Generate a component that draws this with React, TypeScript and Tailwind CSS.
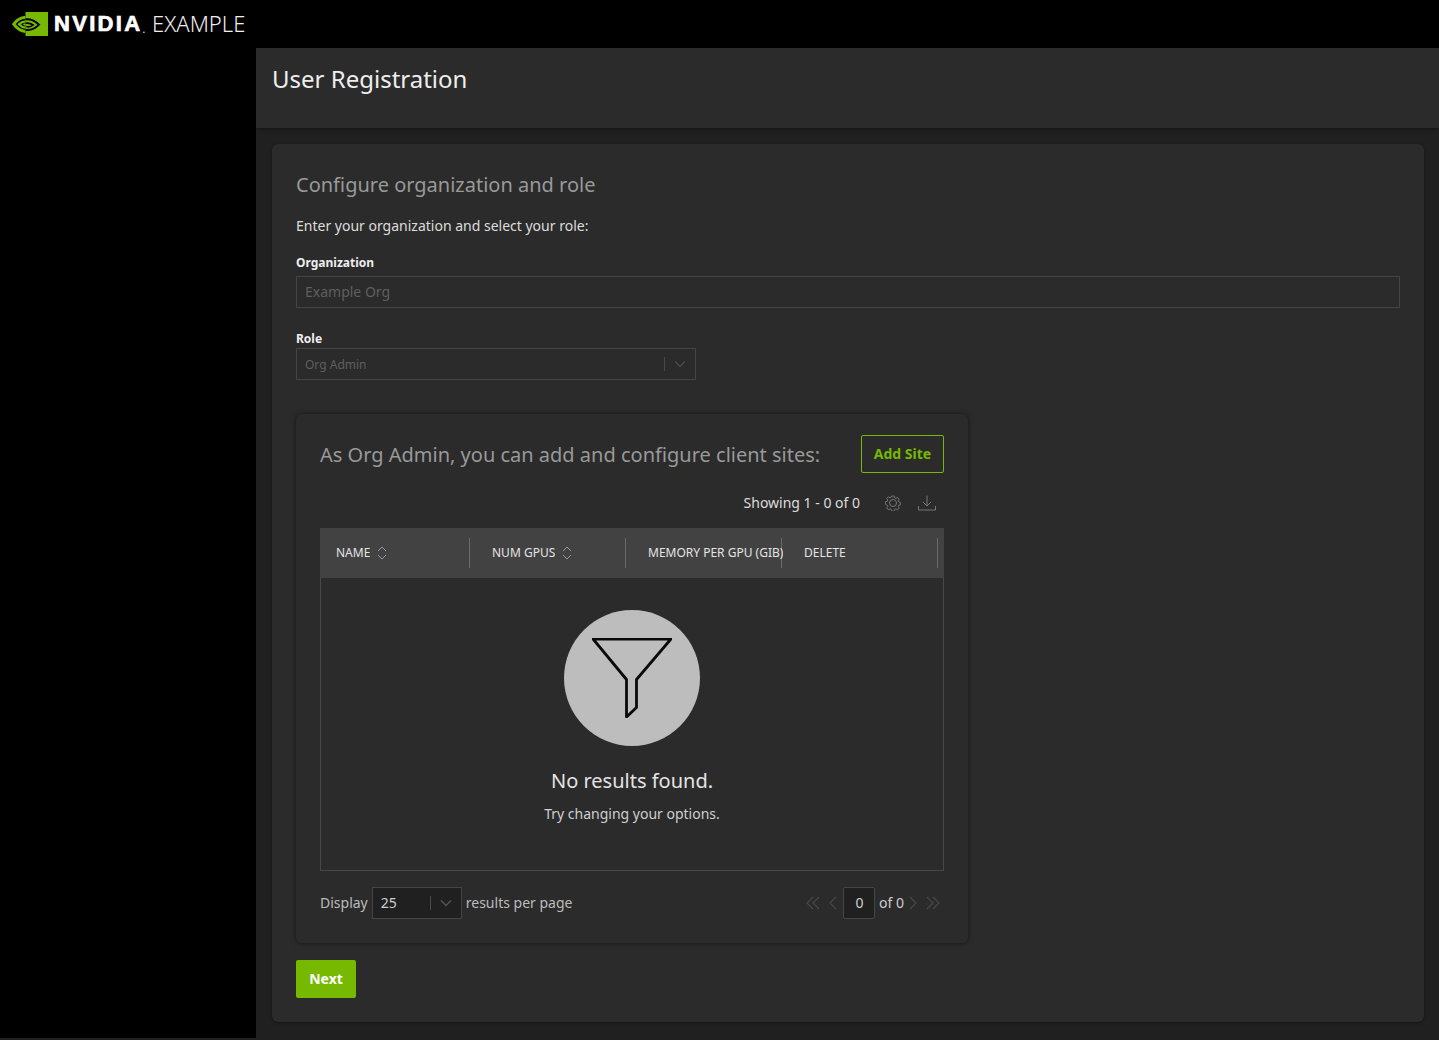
import React from 'react';

const Chevron = ({ d, className = '' }: { d: string; className?: string }) => (
  <svg viewBox="0 0 16 16" fill="none" stroke="currentColor" strokeWidth="1.200" className={className}>
    <path d={d} />
  </svg>
);

const NvidiaEye = () => (
  <svg viewBox="0 0 36 24" fill="none" className="w-9 h-6">
    <rect x="13.500" width="22.500" height="24" fill="#76b900" />
    <path stroke="#76b900" strokeWidth="3" d="M13.500 5.300C8 5.800 4 9 1.800 12.200 4.500 16 9 19.200 13.500 19.400" />
    <path stroke="#76b900" strokeWidth="2.400" d="M13.500 9.400C10.500 9.700 8.500 10.800 7 12.300 8.500 14 10.500 15.300 13.500 15.600" />
    <path fill="#76b900" d="M13.500 11.200v2.800c-1.100-.2-2-.9-2.700-1.700.7-.6 1.600-1 2.700-1.100z" />
    <path stroke="#000" strokeWidth="2" d="M13.500 7.200C18.500 6.800 23.500 9 27 12.600 23.500 16.200 19 18.700 13.500 17.800" />
    <path stroke="#000" strokeWidth="1.600" d="M13.500 11.200C16.500 10.800 19.200 11.500 21.200 13 19.200 14.700 16.500 15.200 14.300 14.600" />
  </svg>
);

const SortIcon = () => (
  <svg viewBox="0 0 10 14" fill="none" stroke="#9a9a9a" strokeWidth="1" className="w-[10px] h-[14px]">
    <path d="M1 5 5 1l4 4M1 9l4 4 4-4" />
  </svg>
);

const HeaderCell = ({ label, sort, width, pad }: { label: string; sort?: boolean; width: string; pad: string }) => (
  <div className={`${width} ${pad} h-[30px] flex items-center gap-[7px] border-r border-[#6a6a6a] whitespace-nowrap shrink-0`}>
    <span className="max-w-[135px] overflow-hidden shrink-0">{label}</span>
    {sort && <SortIcon />}
  </div>
);

const SelectArrow = ({ color }: { color: string }) => (
  <svg viewBox="0 0 12 8" fill="none" stroke={color} strokeWidth="1.500" className="w-3 h-2">
    <path d="M1 1.500 6 6.500l5-5" />
  </svg>
);

export default function App() {
  return (
    <div className="h-[1040px] overflow-hidden bg-[#202020] text-[#cfcfcf] font-['Noto_Sans',sans-serif] text-sm">
      <header className="h-12 bg-black flex items-center pl-3">
        <NvidiaEye />
        <span className="ml-[6px] font-['Liberation_Sans',sans-serif] font-black text-[22px] tracking-[2.300px] text-white [-webkit-text-stroke:0.7px_white]">NVIDIA</span>
        <span className="text-white text-[10px] self-end mb-[12px]">.</span>
        <span className="ml-[7px] text-[22px] font-light text-[#eeeeee]">EXAMPLE</span>
      </header>

      <div className="flex">
        <aside className="w-64 h-[990px] bg-black shrink-0" />

        <main className="flex-1 min-w-0">
          <div className="h-20 bg-[#2b2b2b] pl-4 pt-[13px] shadow-[0_1px_4px_rgba(0,0,0,0.4)]">
            <h1 className="text-2xl leading-[36px] text-[#eeeeee]">User Registration</h1>
          </div>

          <div className="mt-4 mx-4 mr-[15px] h-[878px] bg-[#2b2b2b] rounded-md px-6 pt-6 shadow-[0_1px_3px_rgba(0,0,0,0.35)]">
            <h2 className="text-xl leading-[34px] text-[#999999]">Configure organization and role</h2>
            <p className="mt-3 leading-[24px] text-[#dddddd]">Enter your organization and select your role:</p>

            <label className="block mt-[15px] text-xs leading-[20px] font-bold text-[#eeeeee]">Organization</label>
            <div className="mt-[3px] h-8 border border-[#454545] px-2 flex items-center text-[#5f5f5f]">Example Org</div>

            <label className="block mt-[21px] -mb-px text-xs leading-[20px] font-bold text-[#eeeeee]">Role</label>
            <div className="h-8 w-[400px] border border-[#454545] pl-2 pr-[9px] flex items-center text-xs text-[#5f5f5f]">
              <span className="flex-1 pt-px">Org Admin</span>
              <span className="w-px h-[14px] bg-[#4a4a4a] mr-[9px]" />
              <SelectArrow color="#4a4a4a" />
            </div>

            <section className="mt-[34px] w-[672px] h-[529px] rounded-md bg-[#2b2b2b] px-6 pt-[21px] shadow-[0_0_5px_rgba(0,0,0,0.5)]">
              <div className="flex items-center justify-between h-[38px]">
                <h3 className="text-xl pt-[2px] text-[#999999]">As Org Admin, you can add and configure client sites:</h3>
                <button className="w-[83px] h-[38px] border border-[#76b900] rounded-[2px] text-[#76b900] font-bold">Add Site</button>
              </div>

              <div className="mt-[18px] h-6 flex items-center justify-end text-[#dddddd]">
                <span>Showing 1 - 0 of 0</span>
                <svg viewBox="0 0 16 16" fill="none" stroke="#777777" strokeWidth="1" className="w-4 h-4 ml-[25px]">
                  <circle cx="8" cy="8" r="3.500" />
                  <path d="M6.800 1h2.400l.4 1.800 1.300.6 1.600-1 1.700 1.700-1 1.600.6 1.300 1.800.4v2.400l-1.800.4-.6 1.300 1 1.600-1.700 1.700-1.600-1-1.300.6-.4 1.800H6.800l-.4-1.800-1.300-.6-1.600 1-1.700-1.700 1-1.600-.6-1.300L.4 9.200V6.800l1.800-.4.6-1.300-1-1.600 1.700-1.700 1.600 1 1.300-.6z" />
                </svg>
                <svg viewBox="0 0 18 16" fill="none" stroke="#777777" strokeWidth="1" className="w-[18px] h-4 ml-[17px] mr-[8px]">
                  <path d="M9 .5v10M5 7l4 4 4-4M.5 11v4h17v-4" />
                </svg>
              </div>

              <div className="mt-[13px] h-[50px] bg-[#424242] flex items-center text-xs text-[#e4e4e4]">
                <HeaderCell label="NAME" sort width="w-[150px]" pad="pl-4" />
                <HeaderCell label="NUM GPUS" sort width="w-[156px]" pad="pl-[22px]" />
                <HeaderCell label="MEMORY PER GPU (GIB)" width="w-[156px]" pad="pl-[22px]" />
                <HeaderCell label="DELETE" width="w-[156px]" pad="pl-[22px]" />
              </div>

              <div className="h-[293px] border-x border-b border-[#484848] flex flex-col items-center pt-8">
                <div className="w-[136px] h-[136px] rounded-full bg-[#bdbdbd] flex items-center justify-center">
                  <svg viewBox="0 0 80 80" fill="none" stroke="#0a0a0a" strokeWidth="2.800" strokeLinejoin="round" className="w-20 h-20">
                    <path d="M1 1h78L44.500 41.500v28l-10 9.500V41.500z" />
                  </svg>
                </div>
                <p className="mt-[21px] text-xl leading-[28px] text-[#e4e4e4]">No results found.</p>
                <p className="mt-[7px] leading-[24px] text-[#cfcfcf]">Try changing your options.</p>
              </div>

              <div className="mt-4 h-8 flex items-center">
                <span className="text-[#bbbbbb]">Display</span>
                <div className="ml-1 w-[90px] h-8 border border-[#454545] bg-[#202020] pl-2 pr-[9px] flex items-center text-[#cfcfcf]">
                  <span className="flex-1">25</span>
                  <span className="w-px h-[14px] bg-[#4a4a4a] mr-[9px]" />
                  <SelectArrow color="#555555" />
                </div>
                <span className="ml-1 text-[#bbbbbb]">results per page</span>

                <div className="ml-auto flex items-center text-[#484848]">
                  <Chevron d="M8 2 2 8l6 6M14 2 8 8l6 6" className="w-4 h-4" />
                  <Chevron d="M11 2 5 8l6 6" className="w-4 h-4 ml-1" />
                  <div className="ml-[2px] w-8 h-8 rounded-[2px] border border-[#454545] bg-[#202020] pl-px flex items-center justify-center text-[#cfcfcf]">0</div>
                  <span className="ml-1 text-[#cfcfcf]">of 0</span>
                  <Chevron d="M5 2l6 6-6 6" className="w-4 h-4 ml-px" />
                  <Chevron d="M2 2l6 6-6 6M8 2l6 6-6 6" className="w-4 h-4 ml-1 mr-[3px]" />
                </div>
              </div>
            </section>

            <button className="mt-[17px] w-[60px] h-[38px] rounded-[2px] bg-[#76b900] text-white font-bold">Next</button>
          </div>
        </main>
      </div>
    </div>
  );
}
